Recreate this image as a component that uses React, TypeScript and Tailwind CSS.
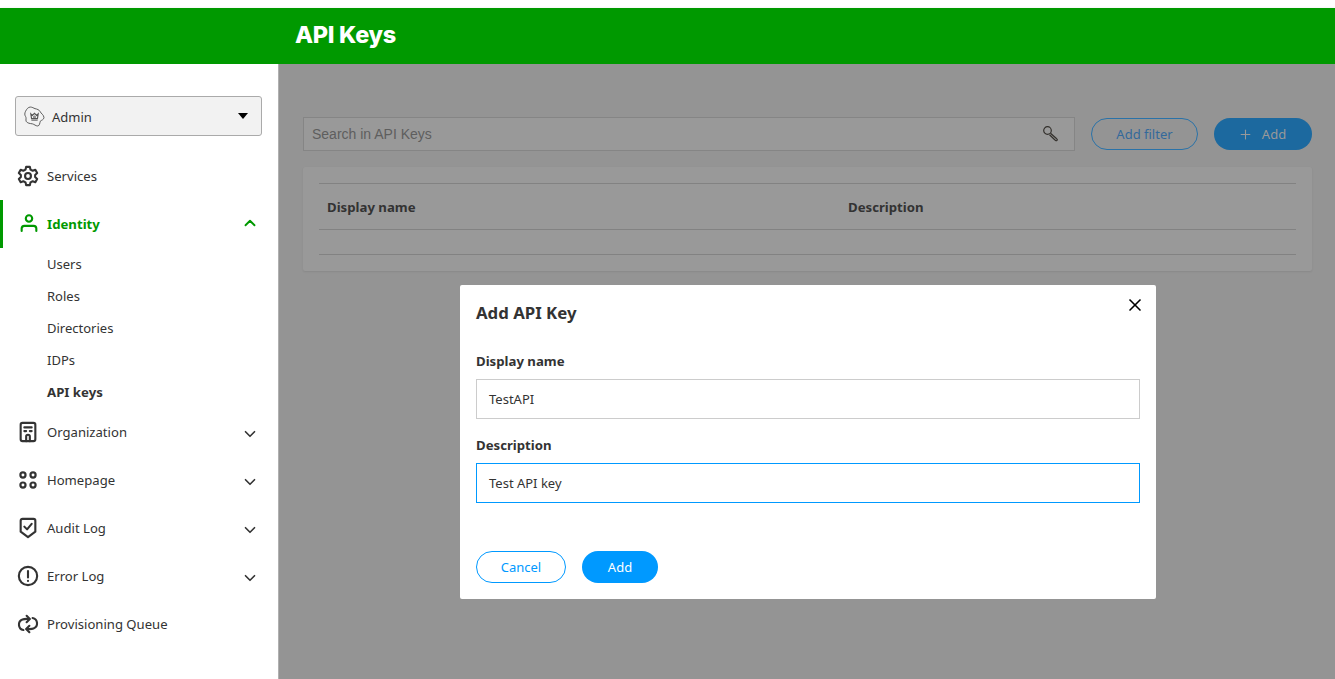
import { ChevronDown, ChevronUp, Plus, X } from "lucide-react";
import type { ReactNode } from "react";

const iconProps = {
  width: 22,
  height: 22,
  viewBox: "0 0 24 24",
  fill: "none",
  stroke: "currentColor",
  strokeWidth: 2.3,
  strokeLinecap: "round" as const,
  strokeLinejoin: "round" as const,
};

const GearIcon = () => (
  <svg {...iconProps}>
    <circle cx="12" cy="12" r="3.2" />
    <path d="M10 2h4l.7 3 2.4 1.2 2.9-1 2 3.5-2.2 2.1v2.4l2.2 2.1-2 3.5-2.9-1-2.4 1.2-.7 3h-4l-.7-3-2.4-1.2-2.9 1-2-3.5 2.2-2.1v-2.4L2 8.700l2-3.500 2.900 1L9.300 5z" />
  </svg>
);

const PersonIcon = () => (
  <svg {...iconProps}>
    <circle cx="12" cy="6" r="3.500" />
    <path d="M4 19.500V17a3 3 0 0 1 3-3h10a3 3 0 0 1 3 3v2.500" />
  </svg>
);

const BuildingIcon = () => (
  <svg {...iconProps}>
    <rect x="4" y="2" width="16" height="20" rx="2" />
    <path d="M8 7h8M8 11h2M14 11h2M10 22v-5a2 2 0 0 1 4 0v5" />
  </svg>
);

const GridIcon = () => (
  <svg {...iconProps} strokeWidth={2.4}>
    <circle cx="6.500" cy="6.500" r="2.800" />
    <circle cx="17.500" cy="6.500" r="2.800" />
    <circle cx="6.500" cy="17.500" r="2.800" />
    <circle cx="17.500" cy="17.500" r="2.800" />
  </svg>
);

const ShieldIcon = () => (
  <svg {...iconProps}>
    <path d="M4 4a2 2 0 0 1 2-2h12a2 2 0 0 1 2 2v12l-8 6-8-6z" />
    <path d="m8 10.500 3 3 5-6" />
  </svg>
);

const AlertIcon = () => (
  <svg {...iconProps}>
    <circle cx="12" cy="12" r="10" />
    <path d="M12 6.500v7M12 17.300v.2" />
  </svg>
);

const SyncIcon = () => (
  <svg {...iconProps}>
    <path d="M7 18.500a6 6 0 0 1-1-11.500c2-.8 4.500-.5 7.500-.5" />
    <path d="m10.500 3 3.500 3.500-3.500 3.500" />
    <path d="M17 5.500a6 6 0 0 1 1 11.500c-2 .8-4.500.5-7.500.5" />
    <path d="M13.500 14 10 17.500l3.500 3.500" />
  </svg>
);

const AdminLogo = () => (
  <svg width="21" height="21" viewBox="0 0 20 20" fill="none" stroke="#555" strokeWidth="0.9">
    <path d="M6 1c2 0 3 1 4.500 1.500 2 .5 4 1 5 3 .5 1.500 3.500 3 3.500 5.500 0 2-2.500 2.500-3.500 3.500-.5 1.500-.5 4.500-2.500 4.500-2 0-3-1.500-5-2-2-.3-5-.5-6-2.500-.5-1.500.5-3-.5-4.500C.500 8.500.500 7 1.500 5C2.500 3 4 1 6 1z" />
    <path d="M6.500 7.500 8 9l2-2 2 2 1.500-1.500-.7 4.500H7.200z" strokeWidth="1.100" />
    <circle cx="10" cy="10.500" r="0.900" />
    <path d="M7 13.500h6" />
  </svg>
);

const KeyIcon = () => (
  <svg width="18" height="18" viewBox="0 0 18 18" fill="none" stroke="#33302c" strokeWidth="1.200">
    <circle cx="5.500" cy="5.500" r="3.800" />
    <path d="m8.500 8.200 5.600 5 1.200 1.300c.3.500-.7 1.500-1.300 1.200l-1.300-1-5.200-5" />
  </svg>
);

const NavRow = ({ icon, label, chevron = false }: { icon: ReactNode; label: string; chevron?: boolean }) => (
  <div className="flex h-12 items-center pl-[17px] pr-[19px] text-[#333333]">
    <span className="flex w-[30px] shrink-0">{icon}</span>
    <span className="flex-1 pt-[2px] text-[13.100px]">{label}</span>
    {chevron && <ChevronDown size={18} strokeWidth={2.200} className="mt-[4px] text-[#333333]" />}
  </div>
);

const SubItem = ({ label, active = false }: { label: string; active?: boolean }) => (
  <div className={`flex h-8 items-center pl-[47px] pt-[2px] text-[#333333] ${active ? "text-[13.200px] font-bold" : "text-[13px]"}`}>
    {label}
  </div>
);

export default function App() {
  return (
    <div className="flex h-[679px] w-[1335px] flex-col overflow-hidden bg-white pt-2 font-['Noto_Sans',sans-serif] text-[#333333]">
      <header className="flex h-14 shrink-0 items-center bg-[#009900] pb-[2px] pl-[295px] shadow-[0_1px_3px_rgba(0,0,0,0.15)]">
        <h1 className="font-['Inter',sans-serif] text-[23.500px] font-extrabold tracking-[-0.3px] text-white">API Keys</h1>
      </header>

      <div className="relative flex min-h-0 flex-1">
        <aside className="w-[279px] shrink-0 border-r border-[#b0b0b0] bg-white pt-8">
          <div className="ml-[15px] mr-4 mb-4 flex h-10 items-center rounded-[3px] border border-[#aaaaaa] bg-[#f2f2f2] pl-[8px] pr-[13px]">
            <AdminLogo />
            <span className="ml-[7px] flex-1 pt-[4px] text-[13px]">Admin</span>
            <span className="h-0 w-0 border-x-[5.500px] border-t-[6px] border-x-transparent border-t-black" />
          </div>

          <NavRow icon={<GearIcon />} label="Services" />

          <div className="flex h-12 items-center border-l-[3px] border-[#009900] pl-[15px] pr-[19px] text-[#009900]">
            <span className="flex w-[29px] shrink-0">
              <PersonIcon />
            </span>
            <span className="flex-1 pt-[2px] text-[13.200px] font-bold">Identity</span>
            <ChevronUp size={18} strokeWidth={2.500} className="mb-[3px]" />
          </div>

          <SubItem label="Users" />
          <SubItem label="Roles" />
          <SubItem label="Directories" />
          <SubItem label="IDPs" />
          <SubItem label="API keys" active />

          <NavRow icon={<BuildingIcon />} label="Organization" chevron />
          <NavRow icon={<GridIcon />} label="Homepage" chevron />
          <NavRow icon={<ShieldIcon />} label="Audit Log" chevron />
          <NavRow icon={<AlertIcon />} label="Error Log" chevron />
          <NavRow icon={<SyncIcon />} label="Provisioning Queue" />
        </aside>

        <main className="relative min-w-0 flex-1 bg-[#949494] pl-6 pr-[23px] pt-[53px]">
          <div className="flex h-[34px] items-center gap-4">
            <div className="flex h-[34px] flex-1 items-center border border-[#858585] bg-[#999999] pl-2 pr-[14px]">
              <span className="flex-1 font-['Liberation_Sans',sans-serif] text-[14px] text-[#5e5e5e]">Search in API Keys</span>
              <KeyIcon />
            </div>
            <button className="h-8 w-[107px] rounded-full border border-[#2a72a8] pt-[1px] text-[13px] text-[#33699b]">Add filter</button>
            <button className="flex h-8 w-[98px] items-center justify-center gap-[9px] rounded-full bg-[#1c699f] pt-[1px] text-[13px] text-[#999999]">
              <Plus size={15} strokeWidth={1.700} className="-ml-[2px]" />
              Add
            </button>
          </div>

          <section className="mt-4 h-[104px] rounded-[2px] bg-[#999999] px-4 pt-4 shadow-[0_1px_2px_rgba(0,0,0,0.08)]">
            <div className="flex h-[47px] items-center border-y border-[#828282] pt-[2px] text-[13.200px] font-bold text-[#333333]">
              <span className="ml-2 w-[521px]">Display name</span>
              <span>Description</span>
            </div>
            <div className="h-[25px] border-b border-[#828282]" />
          </section>

          {/* dialog sits over the dimmed content */}
          <div className="absolute inset-0 flex justify-center pl-[2px] pt-[221px]">
            <div className="relative h-[314px] w-[696px] rounded-[2px] bg-white px-4 pt-[15px]">
              <button className="absolute right-[11px] top-[10px] text-black">
                <X size={20} strokeWidth={2} />
              </button>
              <h2 className="text-[16.800px] font-bold leading-[26px] text-[#333333]">Add API Key</h2>

              <label className="mt-[26px] block text-[13.200px] font-bold leading-[18px]">Display name</label>
              <div className="mt-[9px] flex h-10 items-center border border-[#cccccc] pl-3 pt-[2px] text-[13px]">TestAPI</div>

              <label className="mt-[17px] block text-[13.200px] font-bold leading-[18px]">Description</label>
              <div className="mt-[9px] flex h-10 items-center border border-[#0099ff] pl-3 pt-[2px] text-[13px]">Test API key</div>

              <div className="mt-12 flex gap-4">
                <button className="h-8 w-[90px] rounded-full border border-[#0099ff] pt-[2px] text-[13px] text-[#0099ff]">Cancel</button>
                <button className="h-8 w-[76px] rounded-full bg-[#0099ff] pt-[1px] text-[13px] text-white">Add</button>
              </div>
            </div>
          </div>
        </main>
      </div>
    </div>
  );
}
